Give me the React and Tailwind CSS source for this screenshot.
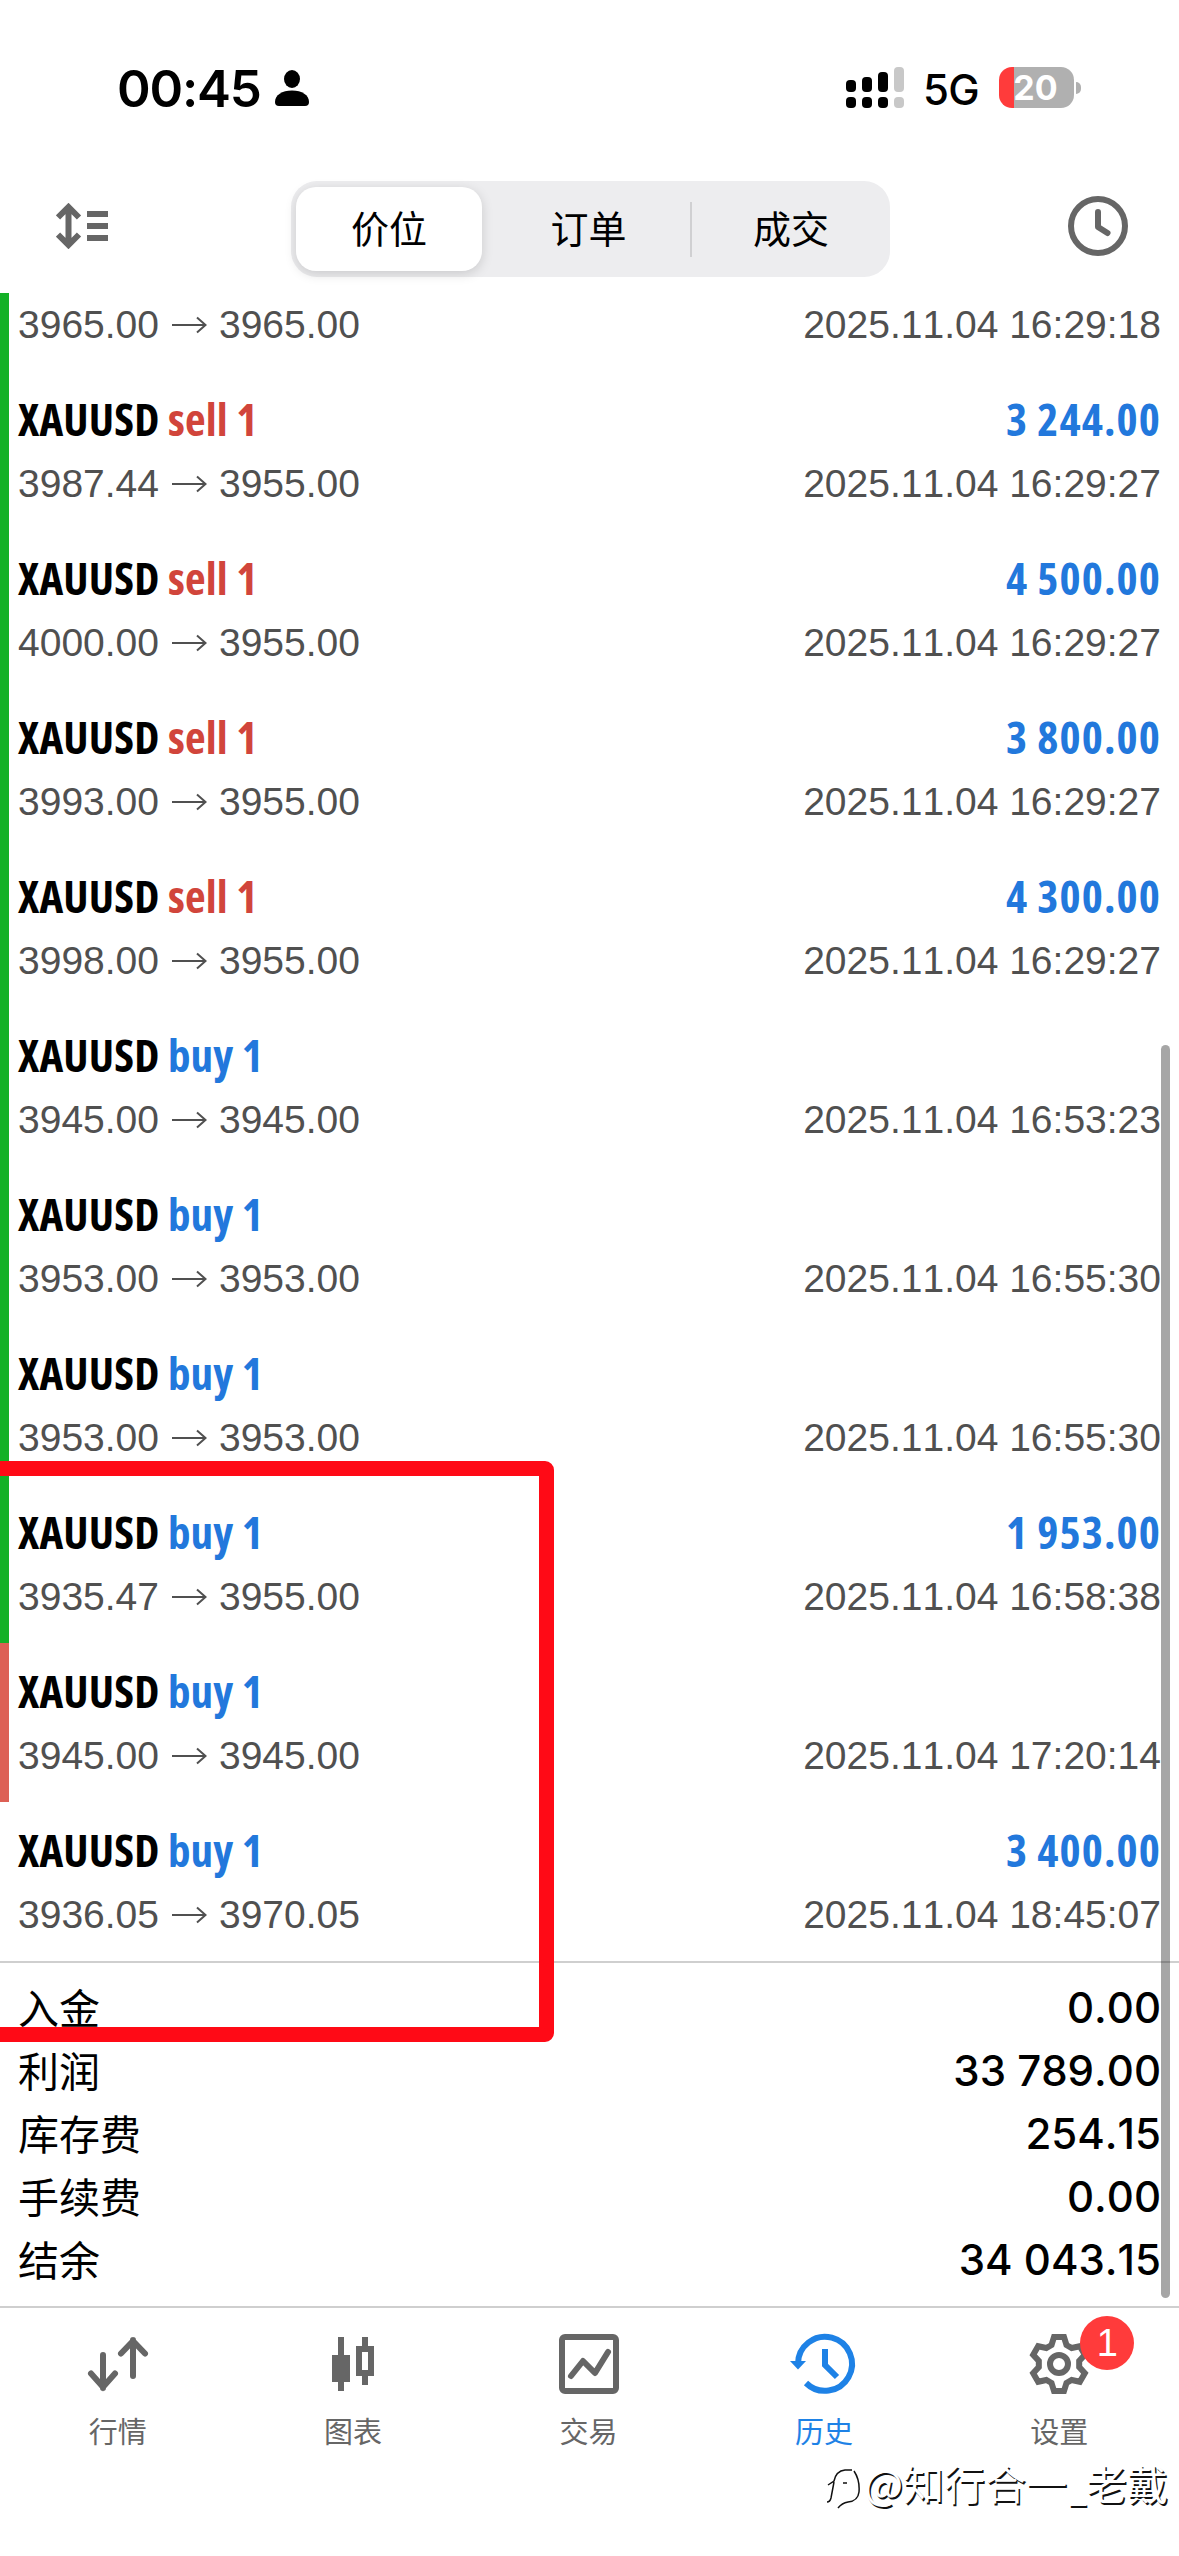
const DEALS = [
  { side: 'sell', open: '3987.44', close: '3955.00', time: '2025.11.04 16:29:27', profit: '3 244.00' },
  { side: 'sell', open: '4000.00', close: '3955.00', time: '2025.11.04 16:29:27', profit: '4 500.00' },
  { side: 'sell', open: '3993.00', close: '3955.00', time: '2025.11.04 16:29:27', profit: '3 800.00' },
  { side: 'sell', open: '3998.00', close: '3955.00', time: '2025.11.04 16:29:27', profit: '4 300.00' },
  { side: 'buy', open: '3945.00', close: '3945.00', time: '2025.11.04 16:53:23' },
  { side: 'buy', open: '3953.00', close: '3953.00', time: '2025.11.04 16:55:30' },
  { side: 'buy', open: '3953.00', close: '3953.00', time: '2025.11.04 16:55:30' },
  { side: 'buy', open: '3935.47', close: '3955.00', time: '2025.11.04 16:58:38', profit: '1 953.00' },
  { side: 'buy', open: '3945.00', close: '3945.00', time: '2025.11.04 17:20:14', mark: 'sl' },
  { side: 'buy', open: '3936.05', close: '3970.05', time: '2025.11.04 18:45:07', profit: '3 400.00', mark: 'none' },
];

const TOTALS = [
  ['入金', '0.00'],
  ['利润', '33 789.00'],
  ['库存费', '254.15'],
  ['手续费', '0.00'],
  ['结余', '34 043.15'],
];

// Stripe on the left edge: green for take profit, red for stop loss.
const STRIPE = { tp: 'bg-[#14b127]', sl: 'bg-[#dd6055]', none: 'bg-transparent' };

// Six-toothed gear outline around (30, 30).
const GEAR = Array.from({ length: 6 })
  .flatMap((_, i) =>
    [[-21.5, 20.4], [-10.5, 27.4], [10.5, 27.4], [21.5, 20.4]].map(([deg, r]) => {
      const a = ((deg + i * 60) * Math.PI) / 180;
      return `${(30 + r * Math.sin(a)).toFixed(2)},${(30 - r * Math.cos(a)).toFixed(2)}`;
    })
  )
  .join(' ');

function StatusBar() {
  return (
    <div className="flex h-[175px] items-start justify-between pl-[117px] pr-[98px] pt-[67px]">
      <div className="flex h-[41px] items-center gap-[14px]">
        <span className="pt-px font-['Inter',sans-serif] text-[51px] font-semibold leading-none tracking-[-1.2px]">00:45</span>
        <svg width="34" height="36" viewBox="0 0 34 36">
          <ellipse cx="17" cy="9" rx="8" ry="9" />
          <path d="M0 32C0 25 7 20.500 17 20.500S34 25 34 32Q34 36 30 36H4Q0 36 0 32Z" />
        </svg>
      </div>
      <div className="flex h-[41px] items-center">
        <svg width="58" height="41" viewBox="0 0 58 41">
          <rect x="0" y="13" width="10" height="12" rx="4" />
          <rect x="16" y="10" width="10" height="15" rx="4" />
          <rect x="32" y="5" width="10" height="20" rx="4" />
          <rect x="48" y="0" width="10" height="25" rx="4" fill="#c8c8c8" />
          <rect x="0" y="30" width="10" height="11" rx="4" />
          <rect x="16" y="30" width="10" height="11" rx="4" />
          <rect x="32" y="30" width="10" height="11" rx="4" />
          <rect x="48" y="30" width="10" height="11" rx="4" fill="#c8c8c8" />
        </svg>
        <span className="ml-[19px] w-[76px] pt-1 font-['Inter',sans-serif] text-[42px] font-medium leading-none tracking-[-0.8px]">5G</span>
        <div className="flex h-[41px] w-[75px] items-center justify-center overflow-hidden rounded-[13px] bg-[linear-gradient(90deg,#ff3b3b_15px,#b0b0b0_15px)] pr-[2px] font-['Inter',sans-serif] text-[34px] font-bold leading-none text-white">
          20
        </div>
        <span className="ml-[2px] h-[12px] w-[5px] rounded-r-full bg-[#b0b0b0]" />
      </div>
    </div>
  );
}

function Header() {
  return (
    <header className="flex h-[118px] items-start pl-[56px] pr-[51px] pt-[6px] font-['Liberation_Sans','Noto_Sans_CJK_SC',sans-serif]">
      <svg className="mt-[22px]" width="52" height="46" viewBox="0 0 52 46" fill="none" stroke="#666" strokeWidth="6">
        <path d="M12.500 5V41M2 14.500L12.500 4L23 14.500M2 31.500L12.500 42L23 31.500M31 11H52M31 23H52M31 35H52" />
      </svg>
      <div className="ml-[183px] flex h-[96px] w-[599px] items-center rounded-[26px] bg-[#ededef] px-[5px] text-[38px]">
        <div className="flex h-[84px] w-[186px] items-center justify-center rounded-[20px] bg-white pt-[2px] shadow-[0_3px_12px_rgba(0,0,0,0.15)]">价位</div>
        <div className="flex h-[55px] w-[208px] items-center justify-center pl-[5px] pt-[2px]">订单</div>
        <div className="flex h-[55px] flex-1 items-center justify-center border-l-2 border-[#d0d0d2] pl-[5px] pt-[2px]">成交</div>
      </div>
      <svg className="ml-auto mt-[15px]" width="60" height="60" viewBox="0 0 60 60" fill="none" stroke="#666" strokeWidth="6">
        <circle cx="30" cy="30" r="27" />
        <path d="M30 16V31L39.500 37" strokeLinecap="round" strokeLinejoin="round" />
      </svg>
    </header>
  );
}

function PriceLine({ open, close, time }) {
  return (
    <div className="flex h-[44px] items-center justify-between font-['Liberation_Sans',sans-serif] text-[39px] leading-[44px] text-[#505050] [font-kerning:none]">
      <span className="flex items-center">
        {open}
        <svg className="mx-[12px]" width="36" height="18" viewBox="0 0 36 18" fill="none" stroke="#505050" strokeWidth="2">
          <path d="M1 9H34M26 1.500L34.500 9L26 16.500" />
        </svg>
        {close}
      </span>
      <span>{time}</span>
    </div>
  );
}

function Deal({ side, open, close, time, profit, mark = 'tp' }) {
  return (
    <li className="flex h-[159px]">
      <span className={`w-[9px] ${STRIPE[mark]}`} />
      <div className="flex-1 pl-[9px] pr-[18px] pt-[18px]">
        <div className="flex h-[60px] items-center justify-between font-['Open_Sans',sans-serif] text-[45px] font-bold leading-[60px] [font-stretch:75%]">
          <span className="tracking-[0.2px]">
            XAUUSD <span className={side === 'sell' ? 'text-[#d1453b]' : 'text-[#2278dc]'}>{side} 1</span>
          </span>
          <span className="tracking-[1.1px] text-[#2278dc]">{profit}</span>
        </div>
        <div className="pt-[13px]">
          <PriceLine open={open} close={close} time={time} />
        </div>
      </div>
    </li>
  );
}

function Tab({ label, active, children }) {
  return (
    <div className={`flex flex-1 flex-col items-center ${active ? 'text-[#1e82e6]' : 'text-[#666]'}`}>
      <div className="relative mt-[26px] h-[60px] w-[60px]">{children}</div>
      <span className="mt-[14px] text-[29px] leading-[44px]">{label}</span>
    </div>
  );
}

function Icon({ children }) {
  return (
    <svg className="overflow-visible" width="60" height="60" viewBox="0 0 60 60" fill="none" stroke="currentColor" strokeWidth="6">
      {children}
    </svg>
  );
}

function TabBar() {
  return (
    <nav className="flex h-[250px] border-t-2 border-[#cfcfcf] pr-[2px] font-['Noto_Sans_CJK_SC',sans-serif]">
      <Tab label="行情">
        <Icon>
          <path d="M15 21V54M3 39.500L15 53L27 39.500M45 42V6M33 19.500L45 7L57 19.500" strokeLinecap="round" />
        </Icon>
      </Tab>
      <Tab label="图表">
        <Icon>
          <path d="M18 3V57M42 3V12M42 42V51" />
          <path d="M9 21H27V48H9Z" fill="currentColor" stroke="none" />
          <path d="M36 15H48V39H36Z" />
        </Icon>
      </Tab>
      <Tab label="交易">
        <Icon>
          <rect x="3" y="3" width="54" height="54" rx="3" />
          <path d="M12 42L24 27L36 39L49 18" strokeLinecap="round" strokeLinejoin="round" />
        </Icon>
      </Tab>
      <Tab label="历史" active>
        <Icon>
          <path d="M4 30A27 27 0 1 1 12 49" />
          <path d="M-4 27H12L4 35.500Z" fill="currentColor" stroke="none" />
          <path d="M31 15V31L43 43" />
        </Icon>
      </Tab>
      <Tab label="设置">
        <Icon>
          <polygon points={GEAR} strokeWidth="6" />
          <circle cx="30" cy="30" r="9" />
        </Icon>
        <span className="absolute -top-[18px] left-[51px] flex h-[54px] w-[54px] items-center justify-center rounded-full bg-[#ff3b3b] font-['Liberation_Sans',sans-serif] text-[38px] leading-none text-white">1</span>
      </Tab>
    </nav>
  );
}

export default function App() {
  return (
    <div className="relative h-[2556px] w-[1179px] overflow-hidden bg-white text-black">
      <StatusBar />
      <Header />

      <div className="flex h-[78px]">
        <span className="w-[9px] bg-[#14b127]" />
        <div className="flex-1 pl-[9px] pr-[18px] pt-[10px]">
          <PriceLine open="3965.00" close="3965.00" time="2025.11.04 16:29:18" />
        </div>
      </div>
      <ul>
        {DEALS.map((deal, i) => (
          <Deal key={i} {...deal} />
        ))}
      </ul>

      <dl className="h-[345px] border-t-2 border-[#cfcfcf] pl-[18px] pr-[18px] pt-[13px]">
        {TOTALS.map(([label, value]) => (
          <div key={label} className="flex h-[63px] items-center justify-between">
            <dt className="pb-[3px] font-['Noto_Sans_CJK_SC',sans-serif] text-[41px] leading-none">{label}</dt>
            <dd className="pt-px font-['Inter',sans-serif] text-[42px] font-medium leading-none [font-kerning:none]">{value}</dd>
          </div>
        ))}
      </dl>
      <TabBar />

      {/* scroll thumb */}
      <div className="absolute right-[9px] top-[1045px] h-[1253px] w-[9px] rounded-full bg-black/35" />
      {/* highlighted deals */}
      <div className="absolute -left-5 top-[1461px] h-[581px] w-[574px] rounded-[9px] border-[15px] border-[#ff0a16]" />
      {/* watermark */}
      <div className="absolute right-[11px] top-[2452px] flex items-center font-['Noto_Sans_CJK_SC',sans-serif] text-[41px] leading-[60px] text-white [text-shadow:1.5px_1.5px_0_#111]">
        <svg className="mr-[4px] mt-[14px]" width="34" height="42" viewBox="0 0 34 42" fill="none" stroke="#111" strokeWidth="1.500">
          <path d="M2 17L8 13Q10 3 19 2H26M28 3Q34 12 33 24Q32 33 22 34Q16 35 12 40M8 14L5 30Q4 34 1 34M17 15H21" />
        </svg>
        <span>@</span>
        <span>知行合一</span>
        <span className="w-[19px] scale-x-75">_</span>
        <span>老戴</span>
      </div>
    </div>
  );
}
